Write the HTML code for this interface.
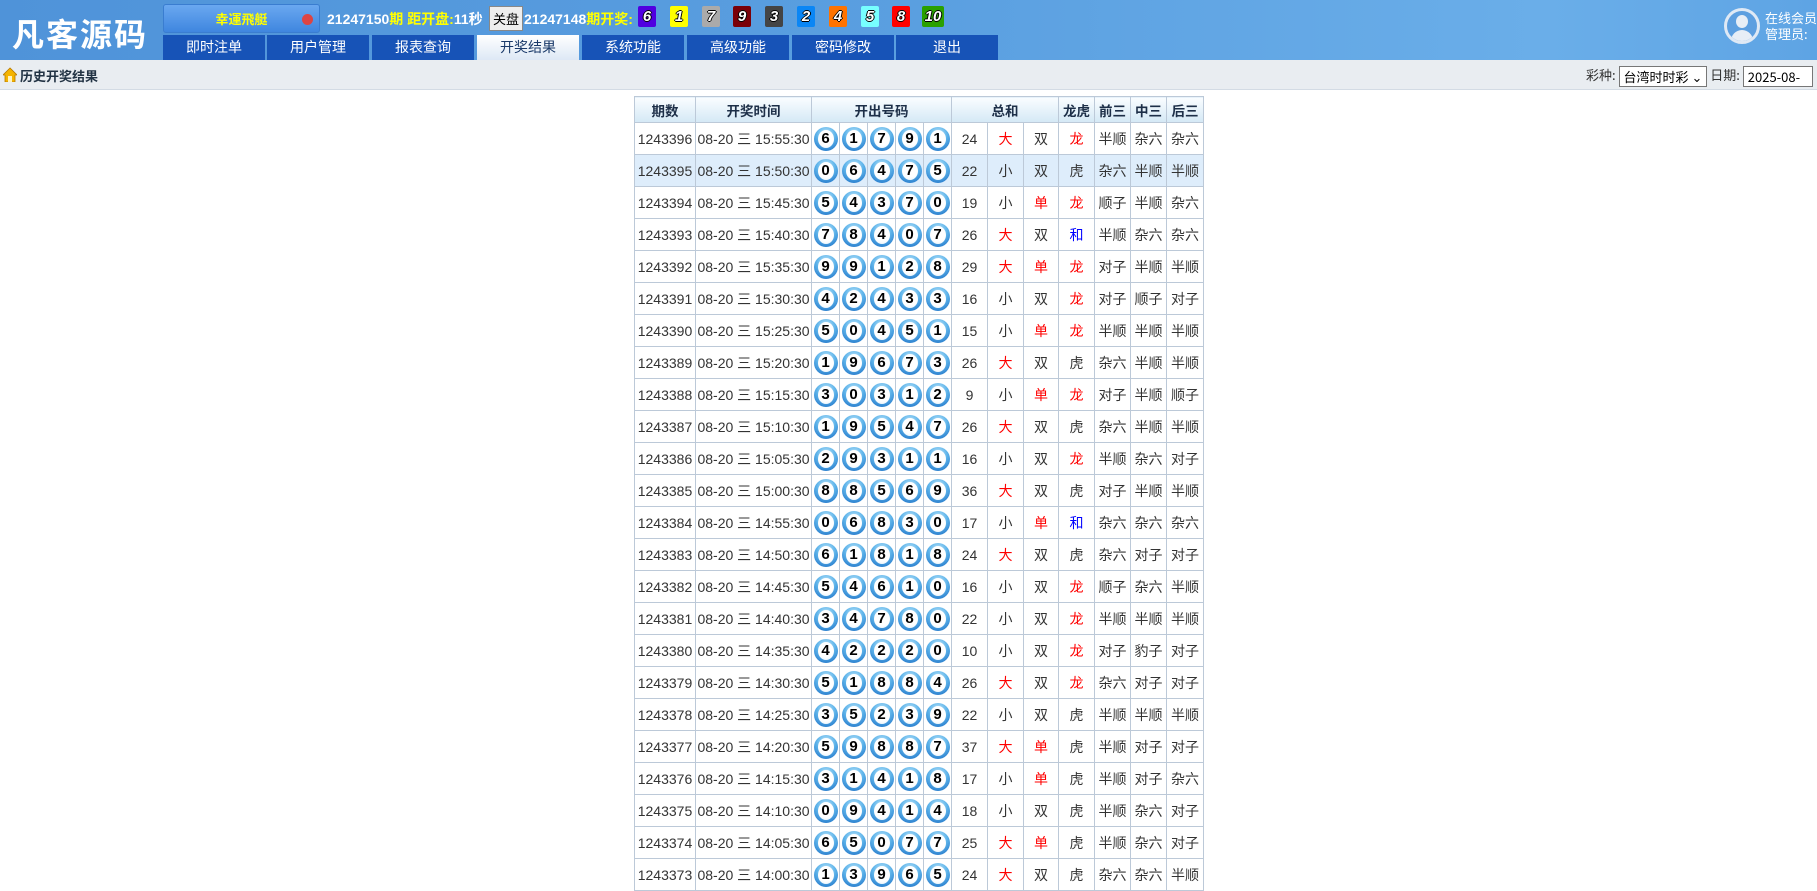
<!DOCTYPE html>
<html><head><meta charset="utf-8">
<style>
*{margin:0;padding:0;box-sizing:border-box}
body{width:1817px;height:889px;overflow:hidden;background:#fff;font-family:"Liberation Sans","Noto Sans CJK SC",sans-serif;position:relative}
#hd{position:absolute;left:0;top:0;width:1817px;height:60px;background:linear-gradient(90deg,#4f93d9 0%,#5a9fe0 50%,#6aaee9 85%,#5ea4e4 100%)}
#logo{position:absolute;left:12px;top:10px;color:#fff;font:bold 32px "Noto Sans CJK SC",sans-serif;letter-spacing:2px}
#sel{position:absolute;left:163px;top:4px;width:157px;height:29px;border-radius:3px;background:linear-gradient(#6aa8f0,#3f86df);border:1px solid #3a7dd0;color:#ff0;font:bold 13px "Noto Sans CJK SC",sans-serif;text-align:center;line-height:28px}
#sel i{position:absolute;left:138px;top:9px;width:11px;height:11px;border-radius:50%;background:#d44}
#info{position:absolute;left:327px;top:9px;color:#fff;font:bold 14px "Liberation Sans","Noto Sans CJK SC",sans-serif;white-space:nowrap}
.y{color:#ff0}
#btn{position:absolute;left:489px;top:6px;width:34px;height:25px;background:#eee;border:1px solid #888;font:13px "Noto Sans CJK SC",sans-serif;line-height:23px;text-align:center;color:#000}
#info2{position:absolute;left:524px;top:9px;color:#fff;font:bold 14px "Liberation Sans","Noto Sans CJK SC",sans-serif}
.nb{position:absolute;top:6px;width:18px;height:21px;font:italic bold 15px "Liberation Sans",sans-serif;color:#fff;text-align:center;line-height:21px;border-radius:2px;text-shadow:-1px 0 #000,1px 0 #000,0 -1px #000,0 1px #000}
.tab{position:absolute;top:35px;width:102px;height:25px;background:#1753b7;color:#fff;font:14px "Noto Sans CJK SC",sans-serif;text-align:center;line-height:25px}
.tab.a{background:linear-gradient(#fff,#dde8f5);color:#1a3a6a}
#av{position:absolute;left:1724px;top:8px;width:36px;height:36px;border-radius:50%;border:3px solid #dfe9f5;background:#5d9fe0;overflow:hidden}
#av:before{content:"";position:absolute;left:9px;top:4px;width:12px;height:13px;border-radius:50%;background:#e8eef6}
#av:after{content:"";position:absolute;left:4px;top:19px;width:22px;height:16px;border-radius:11px 11px 0 0;background:#e8eef6}
#u{position:absolute;left:1765px;top:10px;color:#fff;font:13px "Noto Sans CJK SC",sans-serif;line-height:16px}
#sb{position:absolute;left:0;top:60px;width:1817px;height:30px;background:#e9edf1;border-bottom:1px solid #d3dbe4}
#sb .t{position:absolute;left:20px;top:6px;font:bold 13px "Noto Sans CJK SC",sans-serif;color:#234}
#home{position:absolute;left:3px;top:7px;width:14px;height:15px}
#sb .r{position:absolute;left:1586px;top:5px;font:13px "Noto Sans CJK SC",sans-serif;color:#333;white-space:nowrap}
.s{display:inline-block;vertical-align:middle;border:1px solid #777;background:#fff;height:21px;line-height:19px;padding:0 4px;font-size:13px;color:#000}
table{position:absolute;left:634px;top:96px;border-collapse:collapse;table-layout:fixed;font:14px "Liberation Sans","Noto Sans CJK SC",sans-serif;color:#333}
td,th{border:1px solid #bcc9d8;text-align:center;vertical-align:middle;height:32px;padding:0;white-space:nowrap;line-height:16px}
th{height:26px;background:linear-gradient(#fafdff,#d4e8f5);font:bold 13.5px "Noto Sans CJK SC",sans-serif;color:#1d2f48}
tr.h td{background:#deedfb}
.b{display:block;margin:0 auto;width:24px;height:24px;border-radius:50%;background:radial-gradient(circle at 50% 30%,#c8ecfd 0%,#5db3ea 45%,#1569c2 100%);position:relative}
.b span{position:absolute;left:4px;top:3px;width:16px;height:18px;border-radius:50%;background:radial-gradient(circle at 50% 40%,#fff 60%,#dceefa 100%);font:bold 15px "Liberation Sans",sans-serif;color:#000;line-height:18px;text-align:center}
.r1{color:#f00}.bl{color:#00f}
</style></head><body>
<div id="hd">
<div id="logo">凡客源码</div>
<div id="sel">幸運飛艇<i></i></div>
<div id="info">21247150<span class="y">期</span> <span class="y">距开盘:</span>11秒</div>
<div id="btn">关盘</div>
<div id="info2">21247148<span class="y">期开奖:</span></div>
<div class="nb" style="left:638px;background:#5000e0">6</div>
<div class="nb" style="left:670px;background:#ffff00">1</div>
<div class="nb" style="left:702px;background:#aaa">7</div>
<div class="nb" style="left:733px;background:#7a0008">9</div>
<div class="nb" style="left:765px;background:#444">3</div>
<div class="nb" style="left:797px;background:#0a86f5">2</div>
<div class="nb" style="left:829px;background:#ff7300">4</div>
<div class="nb" style="left:861px;background:#7ff">5</div>
<div class="nb" style="left:892px;background:#f00">8</div>
<div class="nb" style="left:922px;width:22px;background:#2aa000">10</div>
<div class="tab" style="left:163px">即时注单</div>
<div class="tab" style="left:267px">用户管理</div>
<div class="tab" style="left:372px">报表查询</div>
<div class="tab a" style="left:477px">开奖结果</div>
<div class="tab" style="left:582px">系统功能</div>
<div class="tab" style="left:687px">高级功能</div>
<div class="tab" style="left:792px">密码修改</div>
<div class="tab" style="left:896px">退出</div>
<div id="av"></div>
<div id="u">在线会员<br>管理员:</div>
</div>
<div id="sb">
<svg id="home" viewBox="0 0 14 15"><path d="M7 1L0 8h2v7h10V8h2z" fill="#f5b400" stroke="#b77a00" stroke-width=".8"/><rect x="5" y="9" width="4" height="6" fill="#fff3c0"/></svg>
<div class="t">历史开奖结果</div>
<div class="r">彩种: <span class="s">台湾时时彩 ⌄</span> 日期: <span class="s" style="width:70px">2025-08-</span></div>
</div>
<table>
<colgroup><col style="width:61px"><col style="width:116px"><col style="width:28px"><col style="width:28px"><col style="width:28px"><col style="width:28px"><col style="width:28px"><col style="width:36px"><col style="width:36px"><col style="width:35px"><col style="width:36px"><col style="width:36px"><col style="width:36px"><col style="width:37px"></colgroup>
<tr><th>期数</th><th>开奖时间</th><th colspan="5">开出号码</th><th colspan="3">总和</th><th>龙虎</th><th>前三</th><th>中三</th><th>后三</th></tr>
<tr><td>1243396</td><td>08-20 三 15:55:30</td><td><i class="b"><span>6</span></i></td><td><i class="b"><span>1</span></i></td><td><i class="b"><span>7</span></i></td><td><i class="b"><span>9</span></i></td><td><i class="b"><span>1</span></i></td><td>24</td><td class="r1">大</td><td>双</td><td class="r1">龙</td><td>半顺</td><td>杂六</td><td>杂六</td></tr>
<tr class="h"><td>1243395</td><td>08-20 三 15:50:30</td><td><i class="b"><span>0</span></i></td><td><i class="b"><span>6</span></i></td><td><i class="b"><span>4</span></i></td><td><i class="b"><span>7</span></i></td><td><i class="b"><span>5</span></i></td><td>22</td><td>小</td><td>双</td><td>虎</td><td>杂六</td><td>半顺</td><td>半顺</td></tr>
<tr><td>1243394</td><td>08-20 三 15:45:30</td><td><i class="b"><span>5</span></i></td><td><i class="b"><span>4</span></i></td><td><i class="b"><span>3</span></i></td><td><i class="b"><span>7</span></i></td><td><i class="b"><span>0</span></i></td><td>19</td><td>小</td><td class="r1">单</td><td class="r1">龙</td><td>顺子</td><td>半顺</td><td>杂六</td></tr>
<tr><td>1243393</td><td>08-20 三 15:40:30</td><td><i class="b"><span>7</span></i></td><td><i class="b"><span>8</span></i></td><td><i class="b"><span>4</span></i></td><td><i class="b"><span>0</span></i></td><td><i class="b"><span>7</span></i></td><td>26</td><td class="r1">大</td><td>双</td><td class="bl">和</td><td>半顺</td><td>杂六</td><td>杂六</td></tr>
<tr><td>1243392</td><td>08-20 三 15:35:30</td><td><i class="b"><span>9</span></i></td><td><i class="b"><span>9</span></i></td><td><i class="b"><span>1</span></i></td><td><i class="b"><span>2</span></i></td><td><i class="b"><span>8</span></i></td><td>29</td><td class="r1">大</td><td class="r1">单</td><td class="r1">龙</td><td>对子</td><td>半顺</td><td>半顺</td></tr>
<tr><td>1243391</td><td>08-20 三 15:30:30</td><td><i class="b"><span>4</span></i></td><td><i class="b"><span>2</span></i></td><td><i class="b"><span>4</span></i></td><td><i class="b"><span>3</span></i></td><td><i class="b"><span>3</span></i></td><td>16</td><td>小</td><td>双</td><td class="r1">龙</td><td>对子</td><td>顺子</td><td>对子</td></tr>
<tr><td>1243390</td><td>08-20 三 15:25:30</td><td><i class="b"><span>5</span></i></td><td><i class="b"><span>0</span></i></td><td><i class="b"><span>4</span></i></td><td><i class="b"><span>5</span></i></td><td><i class="b"><span>1</span></i></td><td>15</td><td>小</td><td class="r1">单</td><td class="r1">龙</td><td>半顺</td><td>半顺</td><td>半顺</td></tr>
<tr><td>1243389</td><td>08-20 三 15:20:30</td><td><i class="b"><span>1</span></i></td><td><i class="b"><span>9</span></i></td><td><i class="b"><span>6</span></i></td><td><i class="b"><span>7</span></i></td><td><i class="b"><span>3</span></i></td><td>26</td><td class="r1">大</td><td>双</td><td>虎</td><td>杂六</td><td>半顺</td><td>半顺</td></tr>
<tr><td>1243388</td><td>08-20 三 15:15:30</td><td><i class="b"><span>3</span></i></td><td><i class="b"><span>0</span></i></td><td><i class="b"><span>3</span></i></td><td><i class="b"><span>1</span></i></td><td><i class="b"><span>2</span></i></td><td>9</td><td>小</td><td class="r1">单</td><td class="r1">龙</td><td>对子</td><td>半顺</td><td>顺子</td></tr>
<tr><td>1243387</td><td>08-20 三 15:10:30</td><td><i class="b"><span>1</span></i></td><td><i class="b"><span>9</span></i></td><td><i class="b"><span>5</span></i></td><td><i class="b"><span>4</span></i></td><td><i class="b"><span>7</span></i></td><td>26</td><td class="r1">大</td><td>双</td><td>虎</td><td>杂六</td><td>半顺</td><td>半顺</td></tr>
<tr><td>1243386</td><td>08-20 三 15:05:30</td><td><i class="b"><span>2</span></i></td><td><i class="b"><span>9</span></i></td><td><i class="b"><span>3</span></i></td><td><i class="b"><span>1</span></i></td><td><i class="b"><span>1</span></i></td><td>16</td><td>小</td><td>双</td><td class="r1">龙</td><td>半顺</td><td>杂六</td><td>对子</td></tr>
<tr><td>1243385</td><td>08-20 三 15:00:30</td><td><i class="b"><span>8</span></i></td><td><i class="b"><span>8</span></i></td><td><i class="b"><span>5</span></i></td><td><i class="b"><span>6</span></i></td><td><i class="b"><span>9</span></i></td><td>36</td><td class="r1">大</td><td>双</td><td>虎</td><td>对子</td><td>半顺</td><td>半顺</td></tr>
<tr><td>1243384</td><td>08-20 三 14:55:30</td><td><i class="b"><span>0</span></i></td><td><i class="b"><span>6</span></i></td><td><i class="b"><span>8</span></i></td><td><i class="b"><span>3</span></i></td><td><i class="b"><span>0</span></i></td><td>17</td><td>小</td><td class="r1">单</td><td class="bl">和</td><td>杂六</td><td>杂六</td><td>杂六</td></tr>
<tr><td>1243383</td><td>08-20 三 14:50:30</td><td><i class="b"><span>6</span></i></td><td><i class="b"><span>1</span></i></td><td><i class="b"><span>8</span></i></td><td><i class="b"><span>1</span></i></td><td><i class="b"><span>8</span></i></td><td>24</td><td class="r1">大</td><td>双</td><td>虎</td><td>杂六</td><td>对子</td><td>对子</td></tr>
<tr><td>1243382</td><td>08-20 三 14:45:30</td><td><i class="b"><span>5</span></i></td><td><i class="b"><span>4</span></i></td><td><i class="b"><span>6</span></i></td><td><i class="b"><span>1</span></i></td><td><i class="b"><span>0</span></i></td><td>16</td><td>小</td><td>双</td><td class="r1">龙</td><td>顺子</td><td>杂六</td><td>半顺</td></tr>
<tr><td>1243381</td><td>08-20 三 14:40:30</td><td><i class="b"><span>3</span></i></td><td><i class="b"><span>4</span></i></td><td><i class="b"><span>7</span></i></td><td><i class="b"><span>8</span></i></td><td><i class="b"><span>0</span></i></td><td>22</td><td>小</td><td>双</td><td class="r1">龙</td><td>半顺</td><td>半顺</td><td>半顺</td></tr>
<tr><td>1243380</td><td>08-20 三 14:35:30</td><td><i class="b"><span>4</span></i></td><td><i class="b"><span>2</span></i></td><td><i class="b"><span>2</span></i></td><td><i class="b"><span>2</span></i></td><td><i class="b"><span>0</span></i></td><td>10</td><td>小</td><td>双</td><td class="r1">龙</td><td>对子</td><td>豹子</td><td>对子</td></tr>
<tr><td>1243379</td><td>08-20 三 14:30:30</td><td><i class="b"><span>5</span></i></td><td><i class="b"><span>1</span></i></td><td><i class="b"><span>8</span></i></td><td><i class="b"><span>8</span></i></td><td><i class="b"><span>4</span></i></td><td>26</td><td class="r1">大</td><td>双</td><td class="r1">龙</td><td>杂六</td><td>对子</td><td>对子</td></tr>
<tr><td>1243378</td><td>08-20 三 14:25:30</td><td><i class="b"><span>3</span></i></td><td><i class="b"><span>5</span></i></td><td><i class="b"><span>2</span></i></td><td><i class="b"><span>3</span></i></td><td><i class="b"><span>9</span></i></td><td>22</td><td>小</td><td>双</td><td>虎</td><td>半顺</td><td>半顺</td><td>半顺</td></tr>
<tr><td>1243377</td><td>08-20 三 14:20:30</td><td><i class="b"><span>5</span></i></td><td><i class="b"><span>9</span></i></td><td><i class="b"><span>8</span></i></td><td><i class="b"><span>8</span></i></td><td><i class="b"><span>7</span></i></td><td>37</td><td class="r1">大</td><td class="r1">单</td><td>虎</td><td>半顺</td><td>对子</td><td>对子</td></tr>
<tr><td>1243376</td><td>08-20 三 14:15:30</td><td><i class="b"><span>3</span></i></td><td><i class="b"><span>1</span></i></td><td><i class="b"><span>4</span></i></td><td><i class="b"><span>1</span></i></td><td><i class="b"><span>8</span></i></td><td>17</td><td>小</td><td class="r1">单</td><td>虎</td><td>半顺</td><td>对子</td><td>杂六</td></tr>
<tr><td>1243375</td><td>08-20 三 14:10:30</td><td><i class="b"><span>0</span></i></td><td><i class="b"><span>9</span></i></td><td><i class="b"><span>4</span></i></td><td><i class="b"><span>1</span></i></td><td><i class="b"><span>4</span></i></td><td>18</td><td>小</td><td>双</td><td>虎</td><td>半顺</td><td>杂六</td><td>对子</td></tr>
<tr><td>1243374</td><td>08-20 三 14:05:30</td><td><i class="b"><span>6</span></i></td><td><i class="b"><span>5</span></i></td><td><i class="b"><span>0</span></i></td><td><i class="b"><span>7</span></i></td><td><i class="b"><span>7</span></i></td><td>25</td><td class="r1">大</td><td class="r1">单</td><td>虎</td><td>半顺</td><td>杂六</td><td>对子</td></tr>
<tr><td>1243373</td><td>08-20 三 14:00:30</td><td><i class="b"><span>1</span></i></td><td><i class="b"><span>3</span></i></td><td><i class="b"><span>9</span></i></td><td><i class="b"><span>6</span></i></td><td><i class="b"><span>5</span></i></td><td>24</td><td class="r1">大</td><td>双</td><td>虎</td><td>杂六</td><td>杂六</td><td>半顺</td></tr>
</table>
</body></html>
